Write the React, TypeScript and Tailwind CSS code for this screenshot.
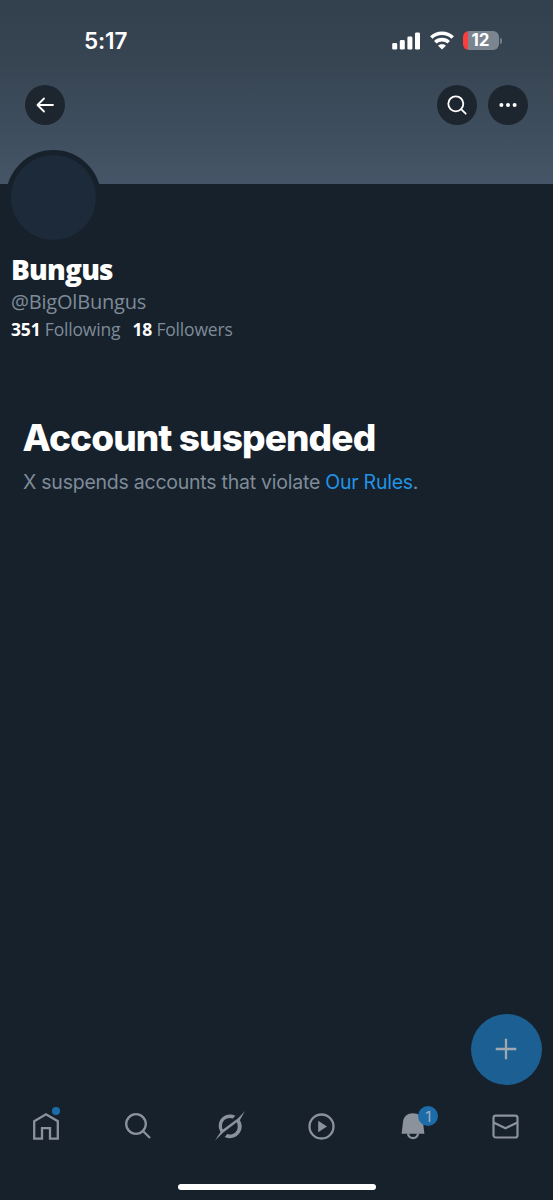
import React from "react";

function SignalIcon() {
  return (
    <svg className="block" width="29" height="18" viewBox="0 0 29 18" fill="#fff">
      <rect x="0.2" y="11" width="5" height="6.6" rx="1.4" />
      <rect x="7.8" y="8" width="5" height="9.6" rx="1.4" />
      <rect x="15.4" y="4.4" width="5" height="13.2" rx="1.4" />
      <rect x="23" y="0.4" width="5" height="17.2" rx="1.4" />
    </svg>
  );
}

function WifiIcon() {
  return (
    <svg className="block" width="24" height="19" viewBox="0 0 24 19" fill="none" stroke="#fff" strokeWidth="3.6">
      <path d="M1.3 6.5C7.2.8 16.8.8 22.7 6.5" />
      <path d="M5.3 11.2c3.7-3.5 9.7-3.5 13.4 0" />
      <path d="M12 18.6l-3.9-3.9c2.1-1.9 5.7-1.9 7.8 0z" fill="#fff" stroke="none" />
    </svg>
  );
}

function Battery() {
  return (
    <div className="flex items-center gap-[1px]">
      <div className="flex h-[19px] w-[36px] items-center justify-center rounded-[6px] bg-[linear-gradient(90deg,#fb3d3c_5px,#7b858f_5px)] text-[17px] leading-[19px] font-bold text-white">
        12
      </div>
      <div className="h-[6px] w-[2px] rounded-r-full bg-[#73808c]" />
    </div>
  );
}

function RoundButton({ children }: { children: React.ReactNode }) {
  return (
    <button className="flex size-10 items-center justify-center rounded-full bg-[#1d262f]">{children}</button>
  );
}

function TopBar() {
  return (
    <header className="h-[184px] bg-[linear-gradient(180deg,#33404d_0%,#374553_35%,#455567_100%)]">
      <div className="flex h-[85.4px] items-start justify-between pr-[51.5px] pl-[84px] font-['Inter',sans-serif]">
        <div className="pt-[27px] text-[22.5px] leading-[28px] font-semibold tracking-[-0.1px] text-white">5:17</div>
        <div className="flex items-center gap-[9px] pt-[31px]">
          <SignalIcon />
          <WifiIcon />
          <Battery />
        </div>
      </div>
      <div className="flex items-center gap-[10.4px] pr-[25.4px] pl-[25.2px]">
        <RoundButton>
          <svg width="18" height="16" viewBox="0 0 18 16" fill="none" stroke="#fff" strokeWidth="1.8" strokeLinecap="round" strokeLinejoin="round">
            <path d="M17 8H1.7M8 1.5L1.5 8L8 14.5" />
          </svg>
        </RoundButton>
        <div className="grow" />
        <RoundButton>
          <svg width="20" height="20" viewBox="0 0 20 20" fill="none" stroke="#fff" strokeWidth="1.8" strokeLinecap="round">
            <circle cx="8.8" cy="8.8" r="7.5" />
            <path d="M14.3 14.3L18.7 18.7" />
          </svg>
        </RoundButton>
        <RoundButton>
          <svg width="18" height="6" viewBox="0 0 18 6" fill="#fff">
            <circle cx="2.4" cy="3" r="2" />
            <circle cx="9" cy="3" r="2" />
            <circle cx="15.6" cy="3" r="2" />
          </svg>
        </RoundButton>
      </div>
    </header>
  );
}

function Profile() {
  return (
    <section className="relative -mt-[34px] pl-[6px]">
      <div className="size-[95px] rounded-full border-[5px] border-[#16212b] bg-[#1c2a39]" />
      <div className="pl-[5px] font-['Open_Sans',sans-serif]">
        <h1 className="mt-[6px] text-[28px] leading-[36px] font-extrabold tracking-[-0.8px] text-white">Bungus</h1>
        <p className="mt-[2px] text-[20px] leading-[26px] tracking-[-0.2px] text-[#7f8b98]">@BigOlBungus</p>
        <div className="flex gap-[12px] text-[17.5px] leading-[28px] tracking-[-0.18px] text-[#7f8b98]">
          <span className="whitespace-nowrap"><b className="font-bold text-white">351</b> Following</span>
          <span className="whitespace-nowrap"><b className="font-bold text-white">18</b> Followers</span>
        </div>
      </div>
    </section>
  );
}

function Notice() {
  return (
    <section className="mt-[71px] pl-[23px] font-['Inter',sans-serif]">
      <h2 className="-ml-[0.5px] text-[37px] leading-[48px] font-extrabold tracking-[-0.9px] whitespace-nowrap text-white">Account suspended</h2>
      <p className="mt-[7px] text-[19.5px] leading-[26px] tracking-[-0.24px] whitespace-nowrap text-[#7f8b98]">
        X suspends accounts that violate <a className="text-[#2294e5]">Our Rules</a>.
      </p>
    </section>
  );
}

function Navigation() {
  return (
    <nav className="grid grid-cols-6 items-center pr-[2px] text-[#8b929c]">
      <div className="flex h-[30px] justify-center">
        <div className="relative size-[28px]">
          <svg className="block" width="28" height="30" viewBox="0 0 28 30" fill="none" stroke="currentColor" strokeWidth="2.3">
            <path d="M2.2 10.2L14 3.3L25.8 10.2V27.7H18V17.2H10V27.7H2.2Z" />
          </svg>
          <span className="absolute -top-[4px] left-[20px] size-[8px] rounded-full bg-[#1b6ca8]" />
        </div>
      </div>
      <div className="flex justify-center">
        <svg width="26" height="26" viewBox="0 0 26 26" fill="none" stroke="currentColor" strokeWidth="2.3">
          <circle cx="11" cy="11" r="9.8" />
          <path d="M18 18L25 25" />
        </svg>
      </div>
      <div className="flex justify-center">
        <svg width="32" height="30" viewBox="0 0 32 30" fill="currentColor">
          <path d="M1 29.5L6.5 21C2.7 14.2 5.5 7.2 11.2 4.5C14.7 2.9 18.4 3.1 21.4 4.8L18.8 7.5C13.8 5.6 8.8 8.8 8.1 13.5C7.8 15.6 8 17.2 8.9 18.6L23.8 7.5L31 0L25.8 9.3C30.2 16 26.6 24.2 19.5 26.6C16.5 27.5 13.7 27.4 10.7 26L13.2 23.1C18.2 24.7 22.8 21.8 23.6 17C23.9 15 23.6 13.1 22.8 11.3L9.3 21.4Z" />
        </svg>
      </div>
      <div className="flex justify-center">
        <svg width="27" height="27" viewBox="0 0 27 27" fill="none" stroke="currentColor" strokeWidth="2.3">
          <circle cx="13.5" cy="13.5" r="12" />
          <path d="M10.2 7.8L19 13.5L10.2 19.2Z" fill="currentColor" stroke="none" />
        </svg>
      </div>
      <div className="flex justify-center">
        <div className="relative h-[28px] w-[24px]">
          <svg className="block" width="24" height="28" viewBox="0 0 24 28">
            <path d="M.6 21.8L2 10C2.5 4.5 6.5 1.2 12 1.2S21.5 4.5 22 10L23.4 21.8Z" fill="currentColor" />
            <path d="M7 21.4C7.3 27.6 16.7 27.6 17 21.4" fill="none" stroke="currentColor" strokeWidth="2.2" />
          </svg>
          <span className="absolute -top-[6px] left-[17px] flex size-[20px] items-center justify-center rounded-full bg-[#1b6ca8] font-['Inter',sans-serif] text-[15px] leading-none text-[#a8b0b9]">1</span>
        </div>
      </div>
      <div className="flex justify-center">
        <svg width="27" height="25" viewBox="0 0 27 25" fill="none" stroke="currentColor" strokeWidth="2.2">
          <rect x="1.5" y="1.7" width="24" height="21.8" rx="2.3" />
          <path d="M1.5 8.4L13.5 14.2L25.5 8.4" />
        </svg>
      </div>
    </nav>
  );
}

export default function App() {
  return (
    <main className="flex h-[1200px] w-[553px] flex-col overflow-hidden bg-[#16212b]">
      <TopBar />
      <Profile />
      <Notice />
      <div className="mt-auto flex justify-end pr-[11.5px]">
        <button className="flex size-[70.5px] items-center justify-center rounded-full bg-[#1c6093]">
          <svg width="22" height="22" viewBox="0 0 22 22" fill="none" stroke="#a0a7ae" strokeWidth="2.3">
            <path d="M11 .7V21.3M.7 11H21.3" />
          </svg>
        </button>
      </div>
      <div className="mt-[26.5px]">
        <Navigation />
      </div>
      <div className="flex h-[59px] items-end justify-center pb-[10px]">
        <div className="h-[6px] w-[198px] rounded-full bg-white" />
      </div>
    </main>
  );
}
